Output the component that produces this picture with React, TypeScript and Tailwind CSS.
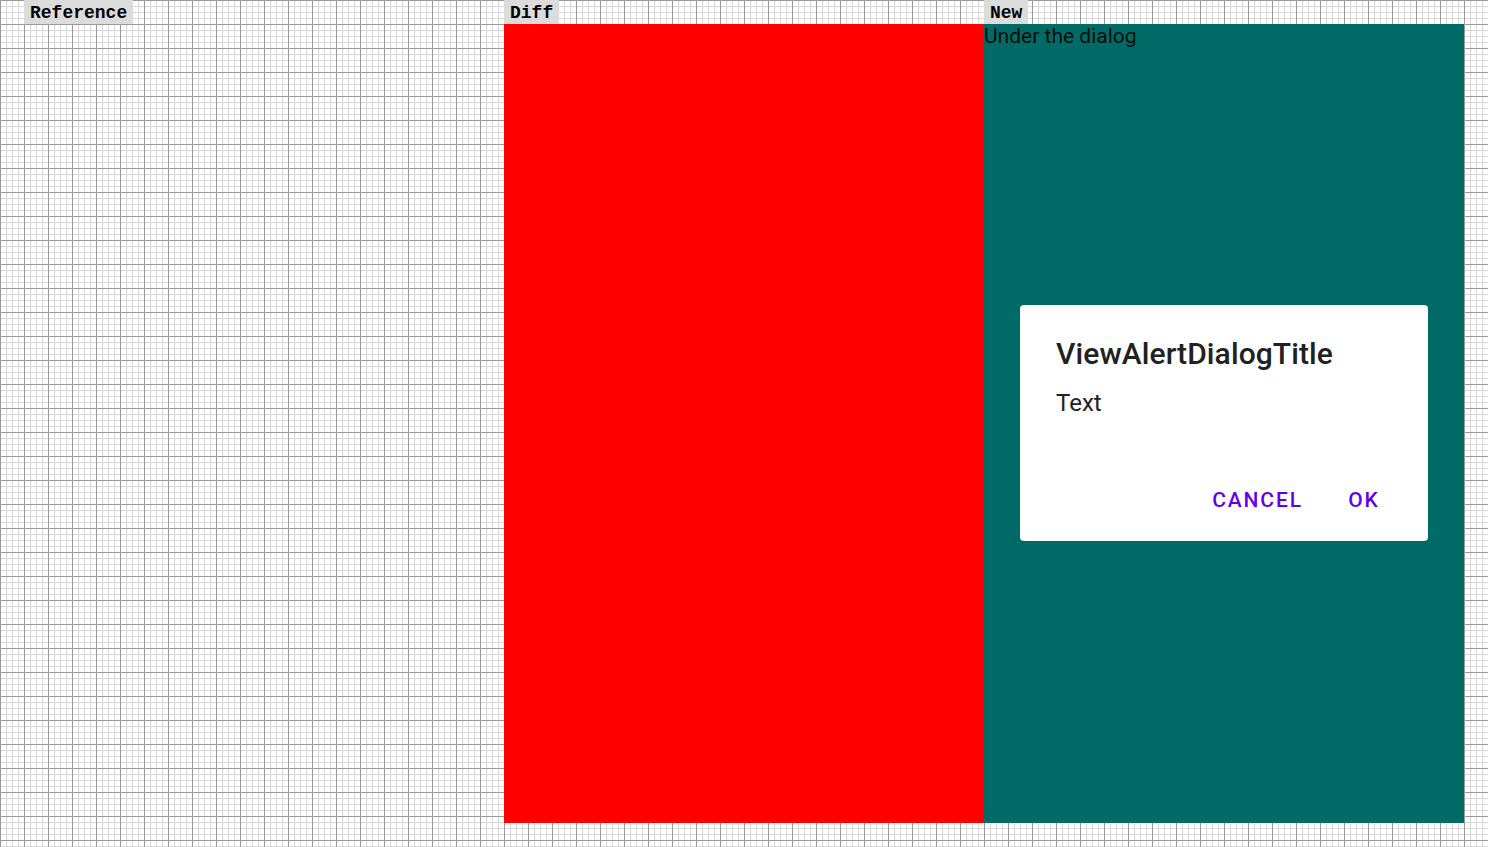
import React from "react";

function Label({ text }: { text: string }) {
  return (
    <div className="h-[24px] self-start bg-[#dcdcdc] px-[6px] pt-[1px] text-[18px] leading-[24px] font-bold text-black [font-family:'Liberation_Mono',monospace]">
      {text}
    </div>
  );
}

export default function App() {
  return (
    <div className="w-[1488px] h-[847px] overflow-hidden bg-white bg-[linear-gradient(to_right,#9a9a9a_1px,transparent_1px),linear-gradient(to_bottom,#9a9a9a_1px,transparent_1px),linear-gradient(to_right,#d8d8d8_1px,transparent_1px),linear-gradient(to_bottom,#d8d8d8_1px,transparent_1px)] bg-[size:24px_24px,24px_24px,6px_6px,6px_6px]">
      <div className="flex pl-[24px]">
        <div className="flex flex-col w-[480px]">
          <Label text="Reference" />
          <div className="h-[799px]" />
        </div>
        <div className="flex flex-col w-[480px]">
          <Label text="Diff" />
          <div className="h-[799px] bg-[#ff0000]" />
        </div>
        <div className="flex flex-col w-[480px]">
          <Label text="New" />
          <div className="relative h-[799px] bg-[#006a67] [font-family:Roboto,sans-serif]">
            <div className="text-[21px] leading-[24px] text-black/90">Under the dialog</div>
            <div className="absolute left-[36px] top-[281px] flex flex-col w-[408px] h-[236px] bg-white rounded-[4px] pl-[36px] pt-[31px] pb-[29px]">
              <div className="text-[30px] leading-[36px] font-medium tracking-[0.1px] text-[#212121]">ViewAlertDialogTitle</div>
              <div className="mt-[13px] text-[24px] leading-[36px] text-[#222222]">Text</div>
              <div className="mt-auto flex justify-end gap-[1px] pr-[16px] text-[21px] leading-[24px] font-medium tracking-[1.9px] text-[#6200ee]">
                <span className="px-[12px]">CANCEL</span>
                <span className="w-[96px] text-center">OK</span>
              </div>
            </div>
          </div>
        </div>
      </div>
    </div>
  );
}
